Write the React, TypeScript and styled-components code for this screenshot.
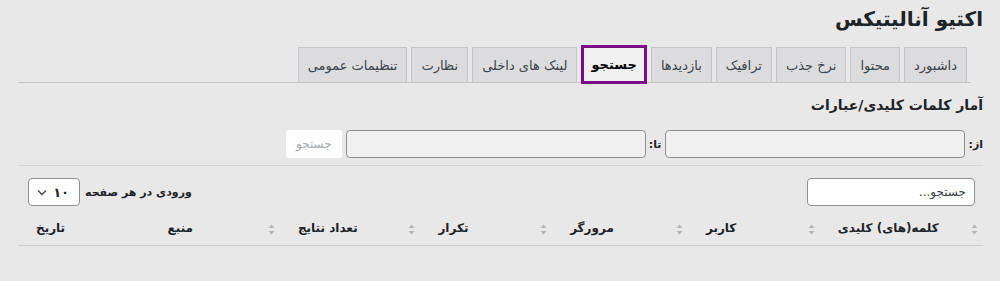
import React from 'react';
import styled, { createGlobalStyle } from 'styled-components';

const GlobalStyle = createGlobalStyle`
    html, body {
        margin: 0;
        padding: 0;
        background: #e8e8e8;
    }
    body {
        direction: rtl;
        font-family: 'DejaVu Sans', 'Noto Sans', sans-serif;
        color: #1d2327;
    }
`;

const Page = styled.div`
    padding: 5px 17px 0 18px;
`;

const Title = styled.h1`
    margin: 0;
    font-size: 20px;
    font-weight: 600;
    line-height: 28px;
    color: #1d2327;
`;

const TabWrapper = styled.nav`
    display: flex;
    gap: 4px;
    margin: 14px 12px 0 0;
    padding-right: 4px;
    border-bottom: 1px solid #c3c4c7;
    height: 35px;
    align-items: flex-end;
`;

const Tab = styled.a<{ $active?: boolean }>`
    box-sizing: border-box;
    height: ${(p) => (p.$active ? '39px' : '35px')};
    margin-bottom: ${(p) => (p.$active ? '-2px' : '0')};
    padding: 0 ${(p) => (p.$active ? '7px' : '9px')};
    display: flex;
    align-items: center;
    background: ${(p) => (p.$active ? '#f0f0f1' : '#dcdcde')};
    border: ${(p) => (p.$active ? '3px solid #7a0c86' : '1px solid #c3c4c7')};
    border-bottom: ${(p) => (p.$active ? '3px solid #7a0c86' : 'none')};
    font-size: 13px;
    font-weight: ${(p) => (p.$active ? 700 : 400)};
    color: ${(p) => (p.$active ? '#000' : '#3c434a')};
    white-space: nowrap;
`;

const SectionTitle = styled.h2`
    margin: 12px 0 0;
    font-size: 14px;
    font-weight: 700;
    line-height: 20px;
`;

const FilterRow = styled.div`
    display: flex;
    align-items: center;
    margin-top: 15px;
    padding-bottom: 7px;
    border-bottom: 1px solid #d4d4d4;
`;

const Label = styled.label`
    font-size: 11px;
    font-weight: 700;
    margin-left: 3px;
`;

const DateInput = styled.input`
    box-sizing: border-box;
    width: 300px;
    height: 28px;
    margin-left: 4px;
    background: #f0f0f0;
    border: 1px solid #8c8f94;
    border-radius: 4px;
`;

const Button = styled.button`
    box-sizing: border-box;
    width: 56px;
    height: 28px;
    background: #fff;
    border: none;
    border-radius: 3px;
    color: #a7aaad;
    font-family: inherit;
    font-size: 12px;
`;

const ControlsRow = styled.div`
    display: flex;
    justify-content: space-between;
    align-items: center;
    margin-top: 12px;
    padding: 0 8px 0 10px;
`;

const SearchInput = styled.input`
    box-sizing: border-box;
    width: 168px;
    height: 28px;
    padding: 0 8px;
    background: #fff;
    border: 1px solid #8c8f94;
    border-radius: 4px;
    font-family: inherit;
    font-size: 12px;
    color: #3c434a;
    &::placeholder {
        color: #3c434a;
    }
`;

const LengthControl = styled.div`
    display: flex;
    align-items: center;
    gap: 5px;
    font-size: 11px;
    font-weight: 700;
`;

const SelectBox = styled.div`
    box-sizing: border-box;
    width: 52px;
    height: 28px;
    display: flex;
    align-items: center;
    justify-content: space-between;
    padding: 0 10px 0 8px;
    background: #fff;
    border: 1px solid #8c8f94;
    border-radius: 4px;
    font-size: 13px;
    font-weight: 600;
`;

const Table = styled.table`
    width: 100%;
    margin-top: 10px;
    border-collapse: collapse;
`;

const HeadCell = styled.th<{ $wide?: boolean }>`
    position: relative;
    width: ${(p) => (p.$wide ? '151px' : '136px')};
    padding: 5px 9px 10px 18px;
    text-align: left;
    font-size: 12px;
    font-weight: 700;
    color: #1d2327;
    border-bottom: 1px solid #d0d0d0;
    white-space: nowrap;
`;

const SortIcon = styled.svg`
    position: absolute;
    right: 5px;
    top: 50%;
    margin-top: -7px;
`;

const Sort = () => (
    <SortIcon width="7" height="11" viewBox="0 0 7 11">
        <path d="M3.5 0.5 L6.5 4 L0.5 4 Z" fill="#b4b4b4" />
        <path d="M3.5 10.5 L6.5 7 L0.5 7 Z" fill="#b4b4b4" />
    </SortIcon>
);

const Chevron = () => (
    <svg width="10" height="7" viewBox="0 0 10 7">
        <path d="M1 1.5 L5 5.5 L9 1.5" fill="none" stroke="#3c434a" strokeWidth="1.3" />
    </svg>
);

const tabs = ['داشبورد', 'محتوا', 'نرخ جذب', 'ترافیک', 'بازدیدها', 'جستجو', 'لینک های داخلی', 'نظارت', 'تنظیمات عمومی'];
const columns = ['کلمه(های) کلیدی', 'کاربر', 'مرورگر', 'تکرار', 'تعداد نتایج', 'منبع', 'تاریخ'];

export default function App() {
    return (
        <Page>
            <GlobalStyle />
            <Title>اکتیو آنالیتیکس</Title>
            <TabWrapper>
                {tabs.map((t) => (
                    <Tab key={t} $active={t === 'جستجو'}>
                        {t}
                    </Tab>
                ))}
            </TabWrapper>
            <SectionTitle>آمار کلمات کلیدی/عبارات</SectionTitle>
            <FilterRow>
                <Label>از:</Label>
                <DateInput />
                <Label>تا:</Label>
                <DateInput />
                <Button>جستجو</Button>
            </FilterRow>
            <ControlsRow>
                <SearchInput placeholder="جستجو..." />
                <LengthControl>
                    <span>ورودی در هر صفحه</span>
                    <SelectBox>
                        <span>۱۰</span>
                        <Chevron />
                    </SelectBox>
                </LengthControl>
            </ControlsRow>
            <Table>
                <thead>
                    <tr>
                        {columns.map((c, i) => (
                            <HeadCell key={c} $wide={i === 0}>
                                {c}
                                {i < columns.length - 1 && <Sort />}
                            </HeadCell>
                        ))}
                    </tr>
                </thead>
            </Table>
        </Page>
    );
}
